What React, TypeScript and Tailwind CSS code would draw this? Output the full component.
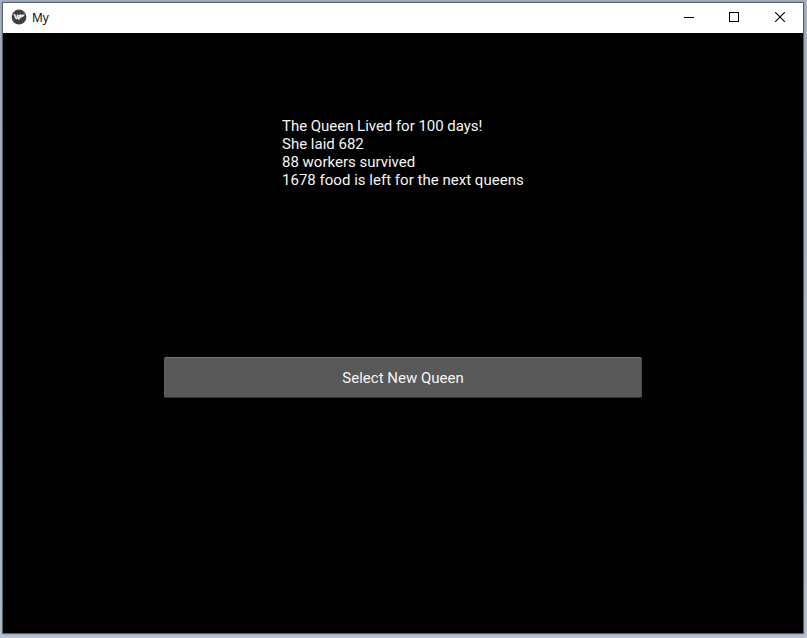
function KivyLogo() {
  return (
    <svg width="16" height="16" viewBox="0 0 16 16" className="shrink-0">
      <circle cx="8" cy="8" r="7.4" fill="#3f4042" />
      <path
        d="M2 5 4.4 5.3 5.4 7.2 6.3 5.3 7.8 6.3 9 5.3 11 5.8 14 5.2 12.5 7.6 9.8 8.7 7.6 11.2 6.7 9.4 5.5 10.4 4 9.2 3.5 7.2Z"
        fill="#ececec"
      />
      <path d="M4.5 5.5 6 8.8M7.2 6.4 8 8.4" stroke="#77797b" strokeWidth="0.6" fill="none" />
    </svg>
  );
}

function WindowControls() {
  return (
    <div className="ml-auto flex h-full items-center pb-[2px]">
      <div className="flex h-full w-[45px] items-center justify-center pl-px">
        <svg width="10" height="10" shapeRendering="crispEdges">
          <rect x="0" y="5" width="10" height="1" fill="#000" />
        </svg>
      </div>
      <div className="flex h-full w-[46px] items-center justify-center">
        <svg width="10" height="10" shapeRendering="crispEdges">
          <rect x="0.5" y="0.5" width="9" height="9" fill="none" stroke="#000" />
        </svg>
      </div>
      <div className="flex h-full w-[46px] items-center justify-center">
        <svg width="10" height="10">
          <path d="M0 0 10 10M10 0 0 10" stroke="#000" strokeWidth="1.1" />
        </svg>
      </div>
    </div>
  );
}

const report = [
  { text: "The Queen Lived for 100 days!", spacing: "tracking-[-0.03px]" },
  { text: "She laid 682", spacing: "tracking-normal" },
  { text: "88 workers survived", spacing: "tracking-normal" },
  { text: "1678 food is left for the next queens", spacing: "tracking-[0.02px]" },
];

export default function App() {
  return (
    <div className="h-[638px] w-[807px] overflow-hidden bg-linear-to-b from-[#a9b4c5] to-[#b9c6d4] pt-[2px] pl-[2px]">
      <div className="flex h-[632px] w-[802px] flex-col border border-[#5d6067] bg-black shadow-[0_0_3px_rgba(50,60,80,0.4)]">
        <header className="flex h-[30px] shrink-0 items-center bg-white pl-2">
          <div className="pb-[2px]">
            <KivyLogo />
          </div>
          <span className="ml-[5px] font-['Open_Sans',sans-serif] text-[12px] leading-4 text-black">My</span>
          <WindowControls />
        </header>
        <main className="flex flex-1 flex-col items-center pt-[84px] font-[Roboto,sans-serif] text-[15px] text-[#f6f6f6]">
          <div className="w-[242px] leading-[18px] whitespace-nowrap">
            {report.map((line) => (
              <p key={line.text} className={line.spacing}>
                {line.text}
              </p>
            ))}
          </div>
          <button className="mt-[168px] flex h-[41px] w-[478px] items-center justify-center rounded-[2px] border border-t-[#777777] border-r-[#4d4d4d] border-b-[#343434] border-l-[#5e5e5e] bg-[#585858] pt-[2px]">
            Select New Queen
          </button>
        </main>
      </div>
    </div>
  );
}
